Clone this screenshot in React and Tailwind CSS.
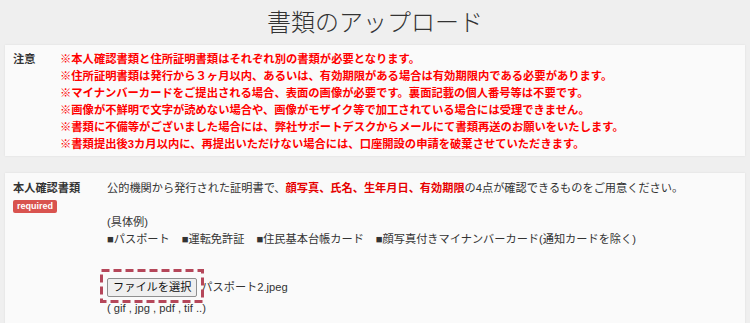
import React from "react";

const font = { fontFamily: '"Liberation Sans", "Noto Sans CJK JP", sans-serif' };

export default function App() {
  const notes = [
    "※本人確認書類と住所証明書類はそれぞれ別の書類が必要となります。",
    "※住所証明書類は発行から３ヶ月以内、あるいは、有効期限がある場合は有効期限内である必要があります。",
    "※マイナンバーカードをご提出される場合、表面の画像が必要です。裏面記載の個人番号等は不要です。",
    "※画像が不鮮明で文字が読めない場合や、画像がモザイク等で加工されている場合には受理できません。",
    "※書類に不備等がございました場合には、弊社サポートデスクからメールにて書類再送のお願いをいたします。",
    "※書類提出後3カ月以内に、再提出いただけない場合には、口座開設の申請を破棄させていただきます。",
  ];
  return (
    <div
      className="w-[750px] h-[323px] overflow-hidden bg-[#efefef] text-[#333] text-[11.2px] leading-[17px]"
      style={font}
    >
      <div className="h-[45px] flex items-center justify-center text-[24px] leading-none text-[#333] font-light">
        書類のアップロード
      </div>

      <div className="mx-[5px] bg-[#fafafa] shadow-[0_0_2px_rgba(0,0,0,0.08)] pt-[6px] pb-[3px] pl-[8px] flex">
        <div className="w-[47px] shrink-0 font-bold">注意</div>
        <div className="text-[#ff0000] font-bold text-[11.3px]">
          {notes.map((n) => (
            <div key={n}>{n}</div>
          ))}
        </div>
      </div>

      <div className="mx-[5px] mt-[17px] h-[200px] bg-[#fafafa] shadow-[0_0_2px_rgba(0,0,0,0.08)] pt-[7px] pl-[8px] flex">
        <div className="w-[94px] shrink-0">
          <div className="font-bold">本人確認書類</div>
          <div className="mt-[3px] inline-block bg-[#d9534f] text-white text-[9px] leading-[13px] h-[13px] px-[4px] rounded-[2px] font-bold">
            required
          </div>
        </div>
        <div>
          <div>
            公的機関から発行された証明書で、
            <span className="text-[#e60000] font-bold">顔写真、氏名、生年月日、有効期限</span>
            の4点が確認できるものをご用意ください。
          </div>
          <div className="h-[17px]" />
          <div>(具体例)</div>
          <div className="flex gap-[12px]">
            <span>■パスポート</span>
            <span>■運転免許証</span>
            <span>■住民基本台帳カード</span>
            <span>■顔写真付きマイナンバーカード(通知カードを除く)</span>
          </div>
          <div className="mt-[30px] flex items-center h-[19px]">
            <span className="relative inline-flex">
              <button className="h-[19px] px-[5px] bg-[#efefef] border border-[#8f8f8f] rounded-[2px] text-[11.2px] leading-[17px] text-[#111]">
                ファイルを選択
              </button>
              <svg
                className="absolute pointer-events-none"
                style={{ left: -7, top: -9, width: 104, height: 34 }}
                width="104"
                height="34"
              >
                <rect
                  x="1.5"
                  y="1.5"
                  width="101"
                  height="31"
                  fill="none"
                  stroke="#b5475a"
                  strokeWidth="3"
                  strokeDasharray="8 4"
                />
              </svg>
            </span>
            <span className="ml-[4px]">パスポート2.jpeg</span>
          </div>
          <div className="mt-[3px]">( gif , jpg , pdf , tif ..)</div>
        </div>
      </div>
    </div>
  );
}
